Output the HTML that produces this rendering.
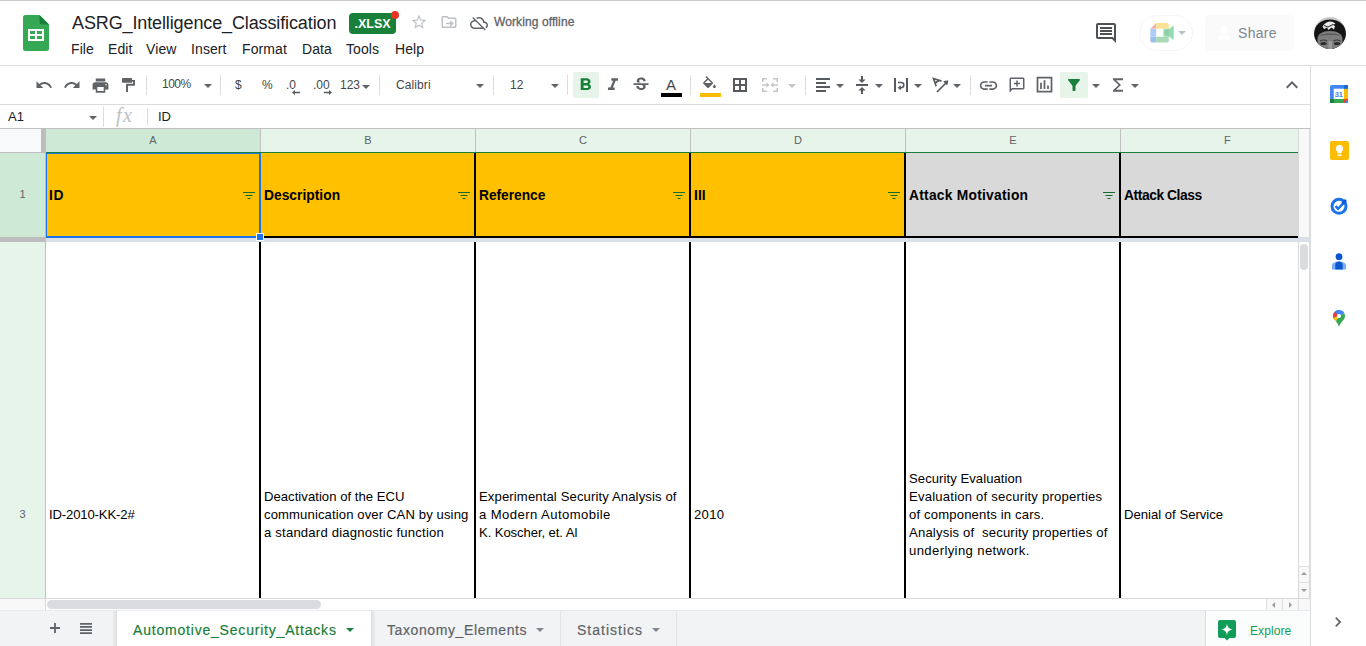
<!DOCTYPE html>
<html lang="en">
<head>
<meta charset="utf-8">
<title>ASRG_Intelligence_Classification - Google Sheets</title>
<style>
*{box-sizing:border-box;margin:0;padding:0}
html,body{width:1366px;height:646px;overflow:hidden;background:#fff}
body{font-family:"Liberation Sans",Arial,sans-serif;color:#202124;position:relative}
.abs{position:absolute}
.ico{position:absolute;fill:#5f6368}
.t{position:absolute;white-space:nowrap;line-height:1}
.menu{font-size:14px;color:#202124;letter-spacing:.1px}
.sep{position:absolute;top:75px;width:1px;height:20px;background:#dadce0}
.tt{font-size:12px;color:#444746}
.caret{position:absolute;width:0;height:0;border-left:4px solid transparent;border-right:4px solid transparent;border-top:4px solid #5f6368}
.hl{position:absolute;top:72px;height:26px;border-radius:2px;background:#e6f4ea}
.colh{position:absolute;top:129px;height:23px;color:#5f6368;font-size:11px;text-align:center;line-height:23px;overflow:hidden}
.colsep{position:absolute;top:129px;width:1px;height:23px;background:#c0c0c0}
.hc{position:absolute;top:153px;height:83px}
.vline{position:absolute;width:2px;background:#000}
.htxt{position:absolute;font-weight:bold;color:#000;white-space:nowrap;line-height:1}
.ctxt{position:absolute;color:#000;white-space:nowrap;line-height:18px}
.tab{position:absolute;font-size:14px;color:#5f6368;white-space:nowrap;line-height:1;-webkit-text-stroke:.2px currentColor}
</style>
</head>
<body>
<div class="abs" style="left:0px;top:0px;width:1366px;height:1px;background:#c9cbcb"></div>
<div class="abs" style="left:0px;top:65px;width:1366px;height:1px;background:#dadce0"></div>
<svg class="abs" style="left:23px;top:15px;width:26px;height:36px" viewBox="0 0 26 36"><path d="M2.5 0h14L26 9.5V33.500a2.500 2.500 0 0 1-2.500 2.500h-21A2.500 2.500 0 0 1 0 33.500v-31A2.500 2.500 0 0 1 2.500 0z" fill="#34a853"/><path d="M16.500 0L26 9.500h-7A2.500 2.500 0 0 1 16.500 7z" fill="#188038"/><path d="M5 14h16v12H5zm2 2v3h5v-3zm7 0v3h5v-3zm-7 5v3h5v-3zm7 0v3h5v-3z" fill="#fff" fill-rule="evenodd"/></svg>
<div class="t " id="doc-title" style="left:72px;top:14px;font-size:18px;color:#202124;letter-spacing:-.12px">ASRG_Intelligence_Classification</div>
<div class="t menu" id="m-File" style="left:71px;top:42px;">File</div>
<div class="t menu" id="m-Edit" style="left:108px;top:42px;">Edit</div>
<div class="t menu" id="m-View" style="left:146px;top:42px;">View</div>
<div class="t menu" id="m-Insert" style="left:191px;top:42px;">Insert</div>
<div class="t menu" id="m-Format" style="left:242px;top:42px;">Format</div>
<div class="t menu" id="m-Data" style="left:302px;top:42px;">Data</div>
<div class="t menu" id="m-Tools" style="left:346px;top:42px;">Tools</div>
<div class="t menu" id="m-Help" style="left:395px;top:42px;">Help</div>
<div class="abs" id="xlsx" style="left:349px;top:13px;width:47px;height:21px;border-radius:4px;background:#188038;color:#fff;font-size:12.5px;font-weight:bold;line-height:22px;text-align:center">.XLSX</div>
<div class="abs" style="left:391px;top:11px;width:8px;height:8px;background:#ea3323;border-radius:50%"></div>
<svg class="ico" style="left:410px;top:13px;width:18px;height:18px;fill:#bdc1c6" viewBox="0 0 24 24"><path d="M22 9.24l-7.19-.62L12 2 9.19 8.63 2 9.24l5.46 4.73L5.82 21 12 17.27 18.18 21l-1.63-7.03L22 9.24zM12 15.4l-3.76 2.27 1-4.28-3.32-2.88 4.38-.38L12 6.1l1.71 4.04 4.38.38-3.32 2.88 1 4.28L12 15.4z"/></svg>
<svg class="ico" style="left:439.5px;top:12.8px;width:18px;height:18px;fill:#bdc1c6" viewBox="0 0 24 24"><path d="M20 6h-8l-2-2H4c-1.1 0-2 .9-2 2v12c0 1.1.9 2 2 2h16c1.1 0 2-.9 2-2V8c0-1.1-.9-2-2-2zm0 12H4V6h5.17l2 2H20v10zm-7.160-1.590L14.250 18l4-4-4-4-1.410 1.410L14.420 13H8v2h6.420l-1.580 1.410z"/></svg>
<svg class="ico" style="left:470px;top:13.5px;width:18px;height:18px;fill:#5f6368" viewBox="0 0 24 24"><path d="M19.35 10.04C18.67 6.59 15.64 4 12 4c-1.48 0-2.85.43-4.01 1.17l1.46 1.46C10.21 6.23 11.08 6 12 6c3.04 0 5.5 2.46 5.5 5.5v.5H19c1.66 0 3 1.34 3 3 0 1.13-.64 2.11-1.56 2.62l1.45 1.45C23.16 18.16 24 16.68 24 15c0-2.64-2.05-4.78-4.65-4.96zM3 5.27l2.75 2.74C2.56 8.15 0 10.77 0 14c0 3.31 2.69 6 6 6h11.73l2 2L21 20.73 4.27 4 3 5.27zM7.73 10l8 8H6c-2.21 0-4-1.79-4-4s1.790-4 4-4h1.730z"/></svg>
<div class="t " id="offline" style="left:494px;top:16px;font-size:12px;color:#5f6368;letter-spacing:.1px;-webkit-text-stroke:.3px #5f6368">Working offline</div>
<svg class="ico" style="left:1094px;top:21px;width:24px;height:24px;fill:#4d5156" viewBox="0 0 24 24"><path d="M21.99 4c0-1.1-.89-2-1.99-2H4c-1.1 0-2 .9-2 2v12c0 1.1.9 2 2 2h14l4 4-.01-18zM20 4v13.17L18.83 16H4V4h16zM6 12h12v2H6zm0-3h12v2H6zm0-3h12v2H6z"/></svg>
<div class="abs" style="left:1139px;top:15px;width:54px;height:36px;border-radius:18px;border:1px solid #f5f5f5;background:#fff"></div>
<svg class="abs" style="left:1150px;top:23.2px;width:24px;height:19.5px;opacity:.42" viewBox="0 0 24 20"><path d="M0 6L6 0v6z" fill="#ea4335"/><path d="M6 0h11a2 2 0 0 1 2 2v4H6z" fill="#fbbc04"/><path d="M0 6h6v8H0z" fill="#4285f4"/><path d="M0 14h6v6H2a2 2 0 0 1-2-2z" fill="#1967d2"/><path d="M6 14h13v4a2 2 0 0 1-2 2H6z" fill="#34a853"/><path d="M13.500 6H19v8h-5.500z" fill="#00ac47"/><path d="M19 6.500L23 3c.5-.4 1-.1 1 .5v13c0 .6-.5.900-1 .5l-4-3.500z" fill="#00ac47"/><path d="M13.500 10L19 6v8z" fill="#00832d"/></svg>
<div class="caret" style="left:1178px;top:31px;border-top-color:#bdc1c6"></div>
<div class="abs" style="left:1205px;top:15px;width:89px;height:36px;background:#fafafa;border-radius:4px"></div>
<svg class="ico" style="left:1214px;top:23px;width:20px;height:20px;fill:#fff" viewBox="0 0 24 24"><path d="M12 12c2.21 0 4-1.79 4-4s-1.79-4-4-4-4 1.79-4 4 1.79 4 4 4zm0 2c-2.67 0-8 1.34-8 4v2h16v-2c0-2.66-5.33-4-8-4z"/></svg>
<div class="t " id="share-t" style="left:1238px;top:26px;font-size:14px;color:#80868b;letter-spacing:.3px">Share</div>
<div class="abs" style="left:1314px;top:17px;width:32px;height:32px;border-radius:50%;overflow:hidden"><svg width="32" height="32" viewBox="0 0 32 32"><rect width="32" height="32" fill="#c9c9c9"/><path d="M0 32V17C0 8 7 2.500 16 2.500S32 8 32 17v15z" fill="#151515"/><path d="M3.500 32V22c0-5 5-8 12.500-8s12.500 3 12.500 8v10z" fill="#7d7d7d"/><path d="M5 19c3-3.500 19-3.500 22 0-3-1.500-19-1.500-22 0z" fill="#5a5a5a"/><path d="M8.500 9.500c2-3.500 5-5 8-5 2 0 4 1 5 2.500l-3 .5 2.500 1.500-1 3.500-2.500-2-3 2.500-1.500-2.500-3 1.500z" fill="#e8e8e8"/><path d="M10 8.500l4 1.500 5-2.500" stroke="#222" stroke-width="1" fill="none"/><ellipse cx="9.500" cy="26.500" rx="3.200" ry="1.600" fill="#2b2b2b"/><ellipse cx="23" cy="26.500" rx="3.200" ry="1.600" fill="#2b2b2b"/><path d="M6 24q3.500-2 7 0M19.500 24q3.500-2 7 0" stroke="#3a3a3a" stroke-width="1.200" fill="none"/><path d="M14.500 24h3.500v8h-3.500z" fill="#9a9a9a"/></svg></div>
<div class="abs" style="left:0px;top:104px;width:1311px;height:1px;background:#dadce0"></div>
<svg class="ico" style="left:35px;top:76px;width:18px;height:18px;fill:#5f6368" viewBox="0 0 24 24"><path d="M12.5 8c-2.65 0-5.05.99-6.9 2.6L2 7v9h9l-3.62-3.62c1.39-1.16 3.16-1.88 5.12-1.88 3.54 0 6.55 2.31 7.6 5.5l2.37-.78C21.08 11.03 17.15 8 12.5 8z"/></svg>
<svg class="ico" style="left:63px;top:76px;width:18px;height:18px;fill:#5f6368" viewBox="0 0 24 24"><path d="M18.4 10.6C16.55 8.99 14.15 8 11.5 8c-4.65 0-8.58 3.03-9.96 7.22L3.9 16c1.05-3.19 4.05-5.5 7.6-5.5 1.95 0 3.73.72 5.12 1.88L13 16h9V7l-3.6 3.6z"/></svg>
<svg class="ico" style="left:90.5px;top:75.5px;width:19px;height:19px;fill:#5f6368" viewBox="0 0 24 24"><path d="M19 8H5c-1.66 0-3 1.34-3 3v6h4v4h12v-4h4v-6c0-1.66-1.34-3-3-3zm-3 11H8v-5h8v5zm3-7c-.55 0-1-.45-1-1s.45-1 1-1 1 .45 1 1-.45 1-1 1zm-1-9H6v4h12V3z"/></svg>
<svg class="abs" style="left:122px;top:78px;width:14px;height:14px" viewBox="0 0 14 14"><rect x="0" y="0" width="10" height="4.800" rx=".5" fill="#5f6368"/><path d="M10 2.900h2v3.900H5v7.200" fill="none" stroke="#5f6368" stroke-width="1.900"/></svg>
<div class="sep" style="left:146px"></div>
<div class="t tt" id="zoom" style="left:162px;top:78px;letter-spacing:-.5px">100%</div>
<div class="caret" style="left:204px;top:84px;border-top-color:#5f6368"></div>
<div class="sep" style="left:220px"></div>
<div class="t tt" style="left:235px;top:79px;">$</div>
<div class="t tt" style="left:262px;top:79px;letter-spacing:-.5px">%</div>
<div class="t tt" style="left:286px;top:79px;">.0</div>
<svg class="abs" style="left:292px;top:90px;width:8px;height:5px" viewBox="0 0 8 5"><path d="M0 2.500L3 0v1.800h5v1.400H3V5z" fill="#575b60"/></svg>
<div class="t tt" style="left:313px;top:79px;">.00</div>
<svg class="abs" style="left:324px;top:90px;width:8px;height:5px" viewBox="0 0 8 5"><path d="M8 2.500L5 0v1.800H0v1.400h5V5z" fill="#575b60"/></svg>
<div class="t tt" style="left:340px;top:79px;">123</div>
<div class="caret" style="left:362px;top:85px;border-top-color:#5f6368"></div>
<div class="sep" style="left:379px"></div>
<div class="t tt" id="fontname" style="left:396px;top:79px;letter-spacing:.1px">Calibri</div>
<div class="caret" style="left:476px;top:84px;border-top-color:#5f6368"></div>
<div class="sep" style="left:493px"></div>
<div class="t tt" style="left:510px;top:79px;">12</div>
<div class="caret" style="left:551px;top:84px;border-top-color:#5f6368"></div>
<div class="sep" style="left:567px"></div>
<div class="hl" style="left:573px;width:26px"></div>
<svg class="ico" style="left:574px;top:75px;width:23px;height:20px;fill:#188038" viewBox="0 0 24 24" preserveAspectRatio="none"><path d="M15.6 10.79c.97-.67 1.65-1.77 1.65-2.79 0-2.26-1.75-4-4-4H7v14h7.04c2.09 0 3.71-1.7 3.71-3.79 0-1.52-.86-2.82-2.15-3.42zM10 6.5h3c.83 0 1.5.67 1.5 1.5s-.67 1.5-1.5 1.5h-3v-3zm3.5 9H10v-3h3.5c.83 0 1.5.67 1.5 1.5s-.67 1.5-1.5 1.5z"/></svg>
<svg class="ico" style="left:603px;top:75px;width:20px;height:20px;fill:#5f6368" viewBox="0 0 24 24"><path d="M10 4v3h2.21l-3.42 8H6v3h8v-3h-2.21l3.42-8H18V4z"/></svg>
<svg class="ico" style="left:631px;top:75px;width:20px;height:20px;fill:#5f6368" viewBox="0 0 24 24"><path d="M7.24 8.75c-.26-.48-.39-1.03-.39-1.67 0-.61.13-1.16.4-1.67.26-.5.63-.93 1.11-1.29.48-.35 1.05-.63 1.7-.83.66-.19 1.39-.29 2.18-.29.81 0 1.54.11 2.21.34.66.22 1.23.54 1.69.94.47.4.83.88 1.08 1.43.25.55.38 1.15.38 1.81h-3.01c0-.31-.05-.59-.15-.85-.09-.27-.24-.49-.44-.68-.2-.19-.45-.33-.75-.44-.3-.1-.66-.16-1.06-.16-.39 0-.74.04-1.03.13-.29.09-.53.21-.72.36-.19.16-.34.34-.44.55-.1.21-.15.43-.15.66 0 .48.25.88.74 1.21.38.25.77.48 1.41.7H7.39c-.05-.08-.11-.17-.15-.25zM21 12v-2H3v2h9.62c.18.07.4.14.55.2.37.17.66.34.87.51.21.17.35.36.43.57.07.2.11.43.11.69 0 .23-.05.45-.14.66-.09.2-.23.38-.42.53-.19.15-.42.26-.71.35-.29.08-.63.13-1.01.13-.43 0-.83-.04-1.18-.13s-.66-.23-.91-.42c-.25-.19-.45-.44-.59-.75-.14-.31-.25-.76-.25-1.21H6.4c0 .55.08 1.13.24 1.58.16.45.37.85.65 1.21.28.35.6.66.98.92.37.26.78.48 1.22.65.44.17.9.3 1.38.39.48.08.96.13 1.44.13.8 0 1.53-.09 2.18-.28s1.21-.45 1.67-.79c.46-.34.82-.77 1.07-1.27s.38-1.07.38-1.71c0-.6-.1-1.14-.31-1.61-.05-.11-.11-.23-.17-.33H21z"/></svg>
<div class="t " id="textcolorA" style="left:666px;top:77px;font-size:15px;color:#444746">A</div>
<div class="abs" style="left:661px;top:93px;width:21px;height:4px;background:#000"></div>
<div class="sep" style="left:690px"></div>
<svg class="ico" style="left:701px;top:76px;width:17px;height:17px;fill:#5f6368" viewBox="0 0 24 24"><path d="M16.56 8.94L7.62 0 6.21 1.41l2.38 2.38-5.15 5.15c-.59.59-.59 1.54 0 2.12l5.5 5.5c.29.29.68.44 1.06.44s.77-.15 1.06-.44l5.5-5.5c.59-.58.59-1.53 0-2.12zM5.21 10L10 5.21 14.79 10H5.21zM19 11.5s-2 2.17-2 3.5c0 1.1.9 2 2 2s2-.9 2-2c0-1.33-2-3.5-2-3.5z"/></svg>
<div class="abs" style="left:700px;top:93px;width:21px;height:4px;background:#fbbc04"></div>
<svg class="abs" style="left:733px;top:78px;width:14px;height:14px" viewBox="0 0 14 14"><path fill-rule="evenodd" d="M0 0h14v14H0zM2 2v4h4V2zM8 2v4h4V2zM2 8v4h4V8zM8 8v4h4V8z" fill="#575b60"/></svg>
<svg class="abs" style="left:762px;top:78px;width:16px;height:14px" viewBox="0 0 16 14"><g fill="none" stroke="#c4c7c5" stroke-width="1.600"><path d="M0.800 4V0.800H5M11 0.800h4.200V4M0.800 10v3.200H5M11 13.200h4.200V10"/><path d="M0 7h5.500M16 7h-5.500"/></g><path d="M4.500 4.200L7.500 7l-3 2.800zM11.500 4.200L8.500 7l3 2.800z" fill="#c4c7c5"/></svg>
<div class="caret" style="left:788px;top:84px;border-top-color:#c4c7c5"></div>
<div class="sep" style="left:805px"></div>
<svg class="abs" style="left:816px;top:78px;width:14px;height:14px" viewBox="0 0 14 14"><path d="M0 0h14v2H0zM0 4h10v2H0zM0 8h14v2H0zM0 12h10v2H0z" fill="#575b60"/></svg>
<div class="caret" style="left:836px;top:84px;border-top-color:#5f6368"></div>
<svg class="abs" style="left:856px;top:76px;width:12px;height:18px" viewBox="0 0 12 18"><path d="M0 8h12v2H0zM5 0h2v3.500h2.600L6 7 2.400 3.500H5zM5 18h2v-3.500h2.600L6 11l-3.600 3.500H5z" fill="#575b60"/></svg>
<div class="caret" style="left:875px;top:84px;border-top-color:#5f6368"></div>
<svg class="abs" style="left:894px;top:78px;width:14px;height:14px" viewBox="0 0 14 14"><path d="M0 0h2v14H0zM12 0h2v14h-2z" fill="#575b60"/><path d="M4 4.500h3.200a2.600 2.600 0 0 1 0 5.200H6" fill="none" stroke="#575b60" stroke-width="1.600"/><path d="M6.800 7.200v5L3.600 9.700z" fill="#575b60"/></svg>
<div class="caret" style="left:914px;top:84px;border-top-color:#5f6368"></div>
<svg class="abs" style="left:932px;top:77px;width:17px;height:16px" viewBox="0 0 17 16"><g fill="none" stroke="#575b60" stroke-width="1.700"><path d="M4.200 9.200L1.500 1.500l8 2.600M2.700 6.200l4-2.500"/><path d="M5 15L15 5"/></g><path d="M16.300 3.200l-1 5.200-4.200-4.200z" fill="#575b60"/></svg>
<div class="caret" style="left:953px;top:84px;border-top-color:#5f6368"></div>
<div class="sep" style="left:970px"></div>
<svg class="ico" style="left:978px;top:74.5px;width:21px;height:21px;fill:#5f6368" viewBox="0 0 24 24"><path d="M3.9 12c0-1.71 1.39-3.1 3.1-3.1h4V7H7c-2.76 0-5 2.24-5 5s2.24 5 5 5h4v-1.9H7c-1.71 0-3.1-1.39-3.1-3.1zM8 13h8v-2H8v2zm9-6h-4v1.9h4c1.71 0 3.1 1.39 3.1 3.1s-1.39 3.1-3.1 3.1h-4V17h4c2.76 0 5-2.24 5-5s-2.24-5-5-5z"/></svg>
<svg class="ico" style="left:1008px;top:76px;width:18px;height:18px;fill:#5f6368" viewBox="0 0 24 24"><path d="M20 2H4c-1.1 0-2 .9-2 2v18l4-4h14c1.1 0 2-.9 2-2V4c0-1.1-.9-2-2-2zm0 14H5.17L4 17.17V4h16v12zM11 14h2v-3h3V9h-3V6h-2v3H8v2h3z"/></svg>
<svg class="ico" style="left:1034px;top:74px;width:21px;height:21px;fill:#5f6368" viewBox="0 0 24 24"><path d="M9 17H7v-7h2v7zm4 0h-2V7h2v10zm4 0h-2v-4h2v4zm2 2H5V5h14v14zM3 3v18h18V3H3z"/></svg>
<div class="hl" style="left:1060px;width:28px"></div>
<svg class="ico" style="left:1065px;top:76px;width:18px;height:18px;fill:#188038" viewBox="0 0 24 24"><path d="M4.25 5.61C6.27 8.2 10 13 10 13v6c0 .55.45 1 1 1h2c.55 0 1-.45 1-1v-6s3.72-4.8 5.74-7.39c.51-.66.04-1.61-.79-1.61H5.04c-.83 0-1.3.95-.79 1.61z"/></svg>
<div class="caret" style="left:1092px;top:84px;border-top-color:#5f6368"></div>
<svg class="ico" style="left:1108px;top:75px;width:20px;height:20px;fill:#5f6368" viewBox="0 0 24 24"><path d="M18 4H6v1.800l6.800 6.200L6 18.200V20h12v-2.300H9.600l6-5.700-6-5.700H18z"/></svg>
<div class="caret" style="left:1131px;top:84px;border-top-color:#5f6368"></div>
<svg class="ico" style="left:1280px;top:73px;width:24px;height:24px;fill:#5f6368" viewBox="0 0 24 24"><path d="M12 8l-6 6 1.41 1.41L12 10.83l4.59 4.58L18 14z"/></svg>
<div class="abs" style="left:0px;top:128px;width:1311px;height:1px;background:#c0c0c0"></div>
<div class="t " id="namebox" style="left:8px;top:110px;font-size:13px;color:#202124">A1</div>
<div class="caret" style="left:89px;top:116px;border-top-color:#5f6368"></div>
<div class="abs" style="left:103px;top:107px;width:1px;height:20px;background:#dadce0"></div>
<div class="t " id="fx" style="left:116px;top:105px;font-size:20px;font-style:italic;font-family:'Liberation Serif',serif;color:#bdc1c6;letter-spacing:1.500px">fx</div>
<div class="abs" style="left:147px;top:108px;width:1px;height:17px;background:#dadce0"></div>
<div class="t " id="fval" style="left:158px;top:110px;font-size:13px;color:#202124">ID</div>
<div class="abs" style="left:0px;top:129px;width:41px;height:23px;background:#f8f9fa"></div>
<div class="abs" style="left:41px;top:129px;width:5px;height:24px;background:#bdbdbd"></div>
<div class="abs" style="left:0px;top:152px;width:46px;height:1px;background:#bdbdbd"></div>
<div class="abs" style="left:0px;top:153px;width:45px;height:84px;background:#ceead6"></div>
<div class="abs" style="left:0px;top:242px;width:45px;height:356px;background:#e6f4ea"></div>
<div class="abs" style="left:45px;top:153px;width:1px;height:445px;background:#c0c0c0"></div>
<div class="abs" style="left:0px;top:237px;width:46px;height:5px;background:#bdbdbd"></div>
<div class="t " id="r1" style="left:0px;top:189px;width:45px;text-align:center;font-size:11px;color:#5f6368">1</div>
<div class="t " id="r3" style="left:0px;top:509px;width:45px;text-align:center;font-size:11px;color:#5f6368">3</div>
<div class="colh" style="left:46px;width:214px;background:#ceead6;padding-right:0">A</div>
<div class="colsep" style="left:260px"></div>
<div class="colh" style="left:261px;width:214px;background:#e6f4ea;padding-right:0">B</div>
<div class="colsep" style="left:475px"></div>
<div class="colh" style="left:476px;width:214px;background:#e6f4ea;padding-right:0">C</div>
<div class="colsep" style="left:690px"></div>
<div class="colh" style="left:691px;width:214px;background:#e6f4ea;padding-right:0">D</div>
<div class="colsep" style="left:905px"></div>
<div class="colh" style="left:906px;width:214px;background:#e6f4ea;padding-right:0">E</div>
<div class="colsep" style="left:1120px"></div>
<div class="colh" style="left:1121px;width:177px;background:#e6f4ea;text-align:left;padding-left:103px">F</div>
<div class="abs" style="left:46px;top:152px;width:1252px;height:1px;background:#188038"></div>
<div class="hc" style="left:46px;width:215px;background:#ffc000"></div>
<div class="hc" style="left:261px;width:215px;background:#ffc000"></div>
<div class="hc" style="left:476px;width:215px;background:#ffc000"></div>
<div class="hc" style="left:691px;width:215px;background:#ffc000"></div>
<div class="hc" style="left:906px;width:215px;background:#d9d9d9"></div>
<div class="hc" style="left:1121px;width:177px;background:#d9d9d9"></div>
<div class="abs" style="left:261px;top:236px;width:1037px;height:2px;background:#000"></div>
<div class="abs" style="left:46px;top:238px;width:1252px;height:4px;background:#dadfe8"></div>
<div class="vline" style="left:474px;top:153px;height:85px"></div>
<div class="vline" style="left:689px;top:153px;height:85px"></div>
<div class="vline" style="left:904px;top:153px;height:85px"></div>
<div class="vline" style="left:1119px;top:153px;height:85px"></div>
<div class="vline" style="left:259px;top:242px;height:356px"></div>
<div class="vline" style="left:474px;top:242px;height:356px"></div>
<div class="vline" style="left:689px;top:242px;height:356px"></div>
<div class="vline" style="left:904px;top:242px;height:356px"></div>
<div class="vline" style="left:1119px;top:242px;height:356px"></div>
<div class="abs" style="left:46px;top:153px;width:215px;height:85px;border:1px solid #1a73e8;border-right-width:2px;border-bottom-width:2px"></div>
<div class="abs" style="left:256px;top:233px;width:8px;height:8px;background:#1a73e8;border:1px solid #fff"></div>
<div class="htxt" id="h0" style="left:49px;top:189px;font-size:13.8px;letter-spacing:0.688px">ID</div>
<div class="htxt" id="h1" style="left:264px;top:189px;font-size:13.8px;letter-spacing:0.019px">Description</div>
<div class="htxt" id="h2" style="left:479px;top:189px;font-size:13.8px;letter-spacing:-0.042px">Reference</div>
<div class="htxt" id="h3" style="left:694px;top:189px;font-size:13.8px;letter-spacing:0.05px">III</div>
<div class="htxt" id="h4" style="left:909px;top:189px;font-size:13.8px;letter-spacing:0.251px">Attack Motivation</div>
<div class="htxt" id="h5" style="left:1124px;top:189px;font-size:13.8px;letter-spacing:-0.421px">Attack Class</div>
<svg class="abs" style="left:243px;top:189px;width:12px;height:12px" viewBox="0 0 12 12"><path d="M0 3h12v1H0zM2.500 6h7v1h-7zM4.500 9h3v1h-3z" fill="#146c2e"/></svg>
<svg class="abs" style="left:458px;top:189px;width:12px;height:12px" viewBox="0 0 12 12"><path d="M0 3h12v1H0zM2.500 6h7v1h-7zM4.500 9h3v1h-3z" fill="#146c2e"/></svg>
<svg class="abs" style="left:673px;top:189px;width:12px;height:12px" viewBox="0 0 12 12"><path d="M0 3h12v1H0zM2.500 6h7v1h-7zM4.500 9h3v1h-3z" fill="#146c2e"/></svg>
<svg class="abs" style="left:888px;top:189px;width:12px;height:12px" viewBox="0 0 12 12"><path d="M0 3h12v1H0zM2.500 6h7v1h-7zM4.500 9h3v1h-3z" fill="#146c2e"/></svg>
<svg class="abs" style="left:1103px;top:189px;width:12px;height:12px" viewBox="0 0 12 12"><path d="M0 3h12v1H0zM2.500 6h7v1h-7zM4.500 9h3v1h-3z" fill="#146c2e"/></svg>
<div class="ctxt" id="c0" style="left:49px;top:506px;font-size:13.1px;letter-spacing:-0.137px">ID-2010-KK-2#</div>
<div class="ctxt" id="c1" style="left:264px;top:488px;font-size:13.1px;letter-spacing:0.034px">Deactivation of the ECU</div>
<div class="ctxt" id="c2" style="left:264px;top:506px;font-size:13.1px;letter-spacing:0.115px">communication over CAN by using</div>
<div class="ctxt" id="c3" style="left:264px;top:524px;font-size:13.1px;letter-spacing:0.201px">a standard diagnostic function</div>
<div class="ctxt" id="c4" style="left:479px;top:488px;font-size:13.1px;letter-spacing:0.122px">Experimental Security Analysis of</div>
<div class="ctxt" id="c5" style="left:479px;top:506px;font-size:13.1px;letter-spacing:0.425px">a Modern Automobile</div>
<div class="ctxt" id="c6" style="left:479px;top:524px;font-size:13.1px;letter-spacing:-0.083px">K. Koscher, et. Al</div>
<div class="ctxt" id="c7" style="left:694px;top:506px;font-size:13.1px;letter-spacing:0.286px">2010</div>
<div class="ctxt" id="c8" style="left:909px;top:470px;font-size:13.1px;letter-spacing:0.056px">Security Evaluation</div>
<div class="ctxt" id="c9" style="left:909px;top:488px;font-size:13.1px;letter-spacing:0.212px">Evaluation of security properties</div>
<div class="ctxt" id="c10" style="left:909px;top:506px;font-size:13.1px;letter-spacing:0.16px">of components in cars.</div>
<div class="ctxt" id="c11" style="left:909px;top:524px;font-size:13.1px;letter-spacing:0.182px">Analysis of&nbsp; security properties of</div>
<div class="ctxt" id="c12" style="left:909px;top:542px;font-size:13.1px;letter-spacing:0.381px">underlying network.</div>
<div class="ctxt" id="c13" style="left:1124px;top:506px;font-size:13.1px;letter-spacing:0.007px">Denial of Service</div>
<div class="abs" style="left:1298px;top:129px;width:13px;height:108px;background:#f8f8f8;border-left:1px solid #d9d9d9;border-right:2px solid #dadce0"></div>
<div class="abs" style="left:1298px;top:237px;width:13px;height:5px;background:#dadfe8;border-left:1px solid #d9d9d9;border-right:2px solid #dadce0"></div>
<div class="abs" style="left:1298px;top:242px;width:13px;height:356px;background:#fff;border-left:1px solid #d9d9d9;border-right:2px solid #dadce0"></div>
<div class="abs" style="left:1300px;top:244px;width:8px;height:26px;background:#dadce0;border-radius:4px"></div>
<div class="abs" style="left:0px;top:598px;width:1311px;height:1px;background:#d9d9d9"></div>
<div class="abs" style="left:0px;top:599px;width:45px;height:11px;background:#f8f8f8"></div>
<div class="abs" style="left:45px;top:599px;width:1px;height:11px;background:#d9d9d9"></div>
<div class="abs" style="left:47px;top:600px;width:274px;height:9px;background:#dadce0;border-radius:4.500px"></div>
<div class="abs" style="left:0px;top:610px;width:1311px;height:1px;background:#e8eaed"></div>
<div class="abs" style="left:1299px;top:566px;width:10px;height:32px;background:#f8f8f8"></div>
<div class="abs" style="left:1298px;top:566px;width:12px;height:1px;background:#e0e0e0"></div>
<div class="abs" style="left:1298px;top:582px;width:12px;height:1px;background:#e0e0e0"></div>
<svg class="abs" style="left:1301px;top:572px;width:6px;height:3px" viewBox="0 0 6 3"><path d="M0 3L3 0l3 3z" fill="#9e9e9e"/></svg>
<svg class="abs" style="left:1301px;top:589px;width:6px;height:3px" viewBox="0 0 6 3"><path d="M0 0h6L3 3z" fill="#9e9e9e"/></svg>
<div class="abs" style="left:1266px;top:599px;width:44px;height:11px;background:#f8f8f8"></div>
<div class="abs" style="left:1266px;top:599px;width:1px;height:11px;background:#e0e0e0"></div>
<div class="abs" style="left:1282px;top:599px;width:1px;height:11px;background:#e0e0e0"></div>
<div class="abs" style="left:1298px;top:599px;width:1px;height:11px;background:#e0e0e0"></div>
<svg class="abs" style="left:1272px;top:602px;width:3px;height:6px" viewBox="0 0 3 6"><path d="M3 0v6L0 3z" fill="#9e9e9e"/></svg>
<svg class="abs" style="left:1289px;top:602px;width:3px;height:6px" viewBox="0 0 3 6"><path d="M0 0l3 3-3 3z" fill="#9e9e9e"/></svg>
<div class="abs" style="left:0px;top:611px;width:1311px;height:35px;background:#f1f3f4"></div>
<svg class="abs" style="left:50px;top:623px;width:10px;height:10px" viewBox="0 0 10 10"><path d="M4.100 0h1.800v4.100H10v1.800H5.900V10H4.100V5.900H0V4.100h4.100z" fill="#5f6368"/></svg>
<svg class="abs" style="left:80px;top:623px;width:12px;height:11px" viewBox="0 0 12 11"><path d="M0 0h12v1.700H0zM0 3.100h12v1.700H0zM0 6.200h12v1.700H0zM0 9.300h12V11H0z" fill="#5f6368"/></svg>
<div class="abs" style="left:112px;top:611px;width:5px;height:35px;background:linear-gradient(to right,rgba(60,64,67,0),rgba(60,64,67,.12))"></div>
<div class="abs" style="left:117px;top:611px;width:254px;height:35px;background:#fff"></div>
<div class="abs" style="left:371px;top:611px;width:5px;height:35px;background:linear-gradient(to left,rgba(60,64,67,0),rgba(60,64,67,.12))"></div>
<div class="tab" id="tab1" style="left:133px;top:623px;color:#188038;letter-spacing:.8px">Automotive_Security_Attacks</div>
<div class="caret" style="left:346px;top:628px;border-top-color:#188038"></div>
<div class="tab" id="tab2" style="left:387px;top:623px;letter-spacing:.6px">Taxonomy_Elements</div>
<div class="caret" style="left:536px;top:628px;border-top-color:#80868b"></div>
<div class="abs" style="left:560px;top:611px;width:1px;height:35px;background:#e3e5e8"></div>
<div class="tab" id="tab3" style="left:577px;top:623px;letter-spacing:1px">Statistics</div>
<div class="caret" style="left:652px;top:628px;border-top-color:#80868b"></div>
<div class="abs" style="left:676px;top:611px;width:1px;height:35px;background:#e3e5e8"></div>
<div class="abs" style="left:1205px;top:611px;width:106px;height:35px;background:#fbfdfc;border-left:1px solid #dadce0"></div>
<svg class="abs" style="left:1218px;top:620px;width:18px;height:21px" viewBox="0 0 18 21"><path d="M2 0h14a2 2 0 0 1 2 2v14a2 2 0 0 1-2 2h-4.500L9 20.500 6.500 18H2a2 2 0 0 1-2-2V2a2 2 0 0 1 2-2z" fill="#0f9d58"/><path d="M9 3.500c.6 4 1.800 5.300 5.800 6-4 .7-5.200 2-5.800 6-.6-4-1.800-5.300-5.800-6 4-.7 5.200-2 5.800-6z" fill="#fff"/></svg>
<div class="t " id="explore" style="left:1250px;top:625px;font-size:12px;color:#0f9d58;letter-spacing:.1px">Explore</div>
<div class="abs" style="left:1310px;top:66px;width:1px;height:580px;background:#dadce0"></div>
<svg class="abs" style="left:1329.5px;top:84.7px;width:18.6px;height:18.6px" viewBox="0 0 20 20"><rect x="0" y="0" width="20" height="20" rx="2" fill="#4285f4"/><rect x="15" y="4" width="5" height="11" fill="#fbbc04"/><rect x="4" y="15" width="11" height="5" fill="#34a853"/><path d="M0 15h4v5H2a2 2 0 0 1-2-2z" fill="#188038"/><path d="M15 15h5l-5 5z" fill="#ea4335"/><path d="M15 0h3a2 2 0 0 1 2 2v2h-5z" fill="#1967d2"/><rect x="4" y="4" width="11" height="11" fill="#fff"/><text x="9.500" y="12.800" font-size="8" font-weight="bold" fill="#4285f4" text-anchor="middle" font-family="Liberation Sans, sans-serif">31</text></svg>
<svg class="abs" style="left:1329.6px;top:140.5px;width:19px;height:19px" viewBox="0 0 20 20"><rect width="20" height="20" rx="2" fill="#fbbc04"/><path d="M10 4a4 4 0 0 0-2.200 7.300V13h4.400v-1.700A4 4 0 0 0 10 4zM8 14.200h4v1.500H8z" fill="#fff"/></svg>
<svg class="abs" style="left:1329px;top:196px;width:20px;height:20px" viewBox="0 0 20 20"><circle cx="10" cy="10.300" r="7" fill="none" stroke="#1a73e8" stroke-width="3"/><path d="M6.500 10.200l2.600 2.500L15.800 5.600" fill="none" stroke="#1a73e8" stroke-width="2.400"/><path d="M12.500 6.500L16 3l2 2-3.500 3.500z" fill="#0b57d0"/></svg>
<svg class="abs" style="left:1331px;top:252px;width:16px;height:20px" viewBox="0 0 16 20"><path d="M1 17.500v-3.800C1 11 3.500 9.400 8 9.400s7 1.600 7 4.300v3.800z" fill="#7cacf8"/><path d="M4.300 17.500v-4.800c0-2 1.500-3.300 3.700-3.300s3.700 1.300 3.700 3.300v4.800z" fill="#0b57d0"/><circle cx="8" cy="4.700" r="3.400" fill="#0b57d0"/></svg>
<svg class="abs" style="left:1333px;top:309.8px;width:12px;height:17px" viewBox="0 0 14 20"><path d="M7 0C3.100 0 0 3.100 0 7c0 1.700.6 3.200 1.600 4.400z" fill="#1a73e8"/><path d="M2.200 2A7 7 0 0 0 .3 9l6.700-2z" fill="#ea4335"/><path d="M7 0a7 7 0 0 1 6.300 3.900L7 7 2.200 2A7 7 0 0 1 7 0z" fill="#4285f4"/><path d="M13.300 3.900c.4.900.7 2 .7 3.100 0 1.700-.6 3.200-1.600 4.400C10.500 13.800 8 16 7 20 6.300 17 4.800 15 3.300 13.300L7 7z" fill="#34a853"/><path d="M.3 9c.3 1 .8 1.800 1.300 2.400.5.700 1.100 1.300 1.700 1.900L7 7z" fill="#fbbc04"/><circle cx="7" cy="7" r="2.400" fill="#fff"/></svg>
<svg class="ico" style="left:1328px;top:612px;width:20px;height:20px;fill:#5f6368" viewBox="0 0 24 24"><path d="M10 6L8.59 7.41 13.17 12l-4.58 4.58L10 18l6-6z"/></svg>
</body>
</html>
